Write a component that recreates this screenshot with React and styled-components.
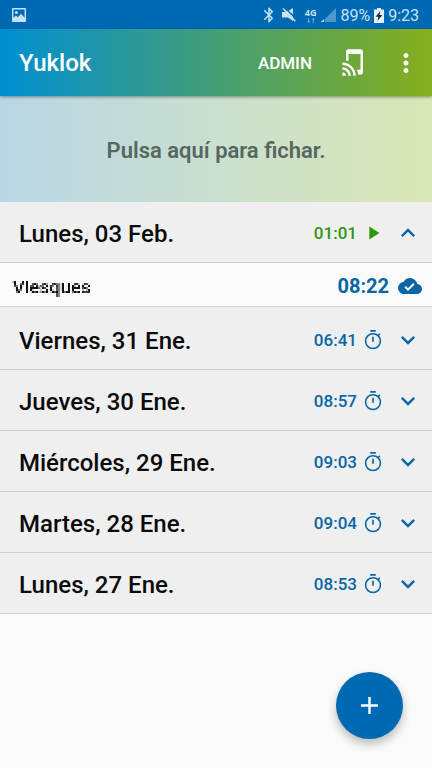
import React, { useState } from 'react';
import styled, { createGlobalStyle } from 'styled-components';
import {
  MdAdd,
  MdBluetooth,
  MdCloudDone,
  MdKeyboardArrowDown,
  MdKeyboardArrowUp,
  MdMoreVert,
  MdPlayArrow,
  MdTapAndPlay,
} from 'react-icons/md';

const COLORS = {
  primary: '#0069b4',
  time: '#0766a3',
  running: '#2f9610',
  status: '#c5e2f7',
  row: '#efefef',
  page: '#fafafa',
  line: '#cdcdcd',
};

const DAYS = [
  {
    label: 'Lunes, 03 Feb.',
    time: '01:01',
    running: true,
    entries: [{ place: 'Viesques', time: '08:22' }],
  },
  { label: 'Viernes, 31 Ene.', time: '06:41' },
  { label: 'Jueves, 30 Ene.', time: '08:57' },
  { label: 'Miércoles, 29 Ene.', time: '09:03' },
  { label: 'Martes, 28 Ene.', time: '09:04' },
  { label: 'Lunes, 27 Ene.', time: '08:53' },
];

const PictureIcon = () => (
  <svg width="14" height="14" viewBox="0 0 14 14" aria-hidden="true">
    <path
      fill="currentColor"
      fillRule="evenodd"
      d="M1 0h12a1 1 0 0 1 1 1v12a1 1 0 0 1-1 1H1a1 1 0 0 1-1-1V1a1 1 0 0 1 1-1zM1.4 1.4v8.4L4 7.4l1.8 1.8 3.2-3.4 3.6 4V1.4z"
    />
    <circle cx="4.4" cy="4.4" r="1.5" fill="currentColor" />
  </svg>
);

const MuteIcon = () => (
  <svg width="14" height="16" viewBox="0 0 14 16" aria-hidden="true">
    <path fill="currentColor" d="M0 5h3.4l1.6-1.3 6 6V14L6 10.6H0zM11 1v6.6L6.6 3.8z" />
    <path stroke="currentColor" strokeWidth="1.5" d="M1 1.4l12.4 12.8" />
  </svg>
);

const SignalIcon = () => (
  <svg width="15" height="14" viewBox="0 0 15 14" aria-hidden="true">
    <path fill="currentColor" opacity="0.4" d="M15 0v14H4V11z" />
    <path fill="currentColor" d="M3 11v3H0z" />
  </svg>
);

const DataIcon = () => (
  <svg width="8" height="5" viewBox="0 0 8 5" aria-hidden="true">
    <path fill="currentColor" opacity="0.55" d="M1.2 0h1v3H3.4L1.7 5 0 3h1.2zM5.8 5h1V2H8L6.3 0 4.6 2h1.2z" />
  </svg>
);

const BatteryIcon = () => (
  <svg width="10" height="15" viewBox="0 0 10 15" aria-hidden="true">
    <path fill="#e3f2fc" d="M3 0h4v1.5h3V15H0V1.5h3z" />
    <path fill="#1b2b38" d="M6.4 3L1.6 8.8h2.8L3.4 13l5-6H5.5z" />
  </svg>
);

const TimerIcon = () => (
  <svg width="22" height="22" viewBox="0 0 24 24" fill="none" stroke="currentColor" aria-hidden="true">
    <circle cx="12" cy="13.2" r="8.1" strokeWidth="1.7" />
    <path strokeWidth="1.8" d="M9 2h6M12 8.4v5.4M17.6 7.2l1.8-1.8" />
  </svg>
);

// Turns whatever it is applied to into a 2px mosaic
const MosaicFilter = () => (
  <HiddenSvg width="0" height="0" aria-hidden="true">
    <filter id="mosaic" x="0" y="0" width="1" height="1" colorInterpolationFilters="sRGB">
      <feFlood x="0" y="0" width="1" height="1" floodColor="#000" />
      <feComposite width="2" height="2" />
      <feTile result="grid" />
      <feComposite in="SourceGraphic" in2="grid" operator="in" result="dots" />
      <feOffset in="dots" dx="1" result="right" />
      <feMerge result="pairs">
        <feMergeNode in="dots" />
        <feMergeNode in="right" />
      </feMerge>
      <feOffset in="pairs" dy="1" result="below" />
      <feMerge>
        <feMergeNode in="pairs" />
        <feMergeNode in="below" />
      </feMerge>
    </filter>
  </HiddenSvg>
);

const Day = ({ day }) => {
  const [open, setOpen] = useState(Boolean(day.entries));
  return (
    <li>
      <DayButton type="button" aria-expanded={open} onClick={() => setOpen(!open)}>
        <DayLabel>{day.label}</DayLabel>
        <DayTime $running={day.running}>
          {day.time}
          {day.running ? <MdPlayArrow size={22} /> : <TimerIcon />}
        </DayTime>
        {open ? <MdKeyboardArrowUp size={28} /> : <MdKeyboardArrowDown size={28} />}
      </DayButton>
      {open && day.entries && (
        <Entries>
          {day.entries.map((entry) => (
            <Entry key={entry.place}>
              <Place>{entry.place}</Place>
              <EntryTime>{entry.time}</EntryTime>
              <MdCloudDone size={24} />
            </Entry>
          ))}
        </Entries>
      )}
    </li>
  );
};

const App = () => (
  <Page>
    <GlobalStyle />
    <MosaicFilter />
    <StatusBar>
      <PictureIcon />
      <StatusGroup>
        <MdBluetooth size={18} />
        <MuteIcon />
        <Network>
          4G
          <DataIcon />
        </Network>
        <SignalIcon />
        <span>89%</span>
        <BatteryIcon />
        <span>9:23</span>
      </StatusGroup>
    </StatusBar>
    <AppBar>
      <Title>Yuklok</Title>
      <AdminButton type="button">ADMIN</AdminButton>
      <IconButton type="button" aria-label="Fichar con NFC">
        <MdTapAndPlay size={29} />
      </IconButton>
      <IconButton type="button" aria-label="Más opciones">
        <MdMoreVert size={30} />
      </IconButton>
    </AppBar>
    <main>
      <ClockButton type="button">Pulsa aquí para fichar.</ClockButton>
      <DayList>
        {DAYS.map((day) => <Day key={day.label} day={day} />)}
      </DayList>
    </main>
    <AddButton type="button" aria-label="Añadir">
      <MdAdd size={29} />
    </AddButton>
  </Page>
);

const GlobalStyle = createGlobalStyle`
  *, *::before, *::after {
    box-sizing: border-box;
  }
  body {
    margin: 0;
    background: ${COLORS.page};
    font-family: Roboto, "Liberation Sans", sans-serif;
  }
  button {
    border: 0;
    padding: 0;
    background: none;
    color: inherit;
    font: inherit;
    cursor: pointer;
  }
  svg {
    display: block;
    flex-shrink: 0;
  }
`;

const Page = styled.div`
  min-height: 100vh;
`;

const HiddenSvg = styled.svg`
  position: absolute;
`;

const StatusBar = styled.div`
  display: flex;
  align-items: center;
  justify-content: space-between;
  height: 29px;
  padding: 1px 13px 0 12px;
  background: ${COLORS.primary};
  color: ${COLORS.status};
  font-size: 16px;
`;

const StatusGroup = styled.div`
  display: flex;
  align-items: center;
  gap: 4px;
`;

const Network = styled.span`
  display: flex;
  flex-direction: column;
  align-items: center;
  gap: 1px;
  margin: 0 1px 0 5px;
  font: 700 9px/9px "Open Sans", sans-serif;
`;

const AppBar = styled.header`
  position: relative;
  display: flex;
  align-items: center;
  height: 67px;
  padding: 0 11px 0 19px;
  background: linear-gradient(to right, #008fd3, #449e75 50%, #86ae1c);
  box-shadow: 0 1px 3px rgba(0, 0, 0, 0.4);
  color: #fff;
`;

const Title = styled.h1`
  flex: 1;
  margin: 0;
  font-size: 24px;
  font-weight: 500;
`;

const AdminButton = styled.button`
  margin-right: 28px;
  font-size: 17px;
  font-weight: 500;
`;

const IconButton = styled.button`
  & + & {
    margin-left: 22px;
  }
`;

const ClockButton = styled.button`
  display: block;
  width: 100%;
  height: 106px;
  padding-top: 2px;
  background: linear-gradient(to right, #b9d6e5, #cadfcf 50%, #d9e6b3);
  color: #56675f;
  font-size: 22px;
  font-weight: 600;
`;

const DayList = styled.ul`
  margin: 0;
  padding: 0;
  list-style: none;
`;

const DayButton = styled.button`
  display: flex;
  align-items: center;
  width: 100%;
  height: 61px;
  padding: 2px 10px 0 19px;
  border-bottom: 1px solid ${COLORS.line};
  background: ${COLORS.row};
  color: ${COLORS.time};
`;

const DayLabel = styled.span`
  flex: 1;
  padding-top: 2px;
  color: #0b0b0b;
  font-size: 24px;
  font-weight: 500;
  text-align: left;
`;

const DayTime = styled.span`
  display: flex;
  align-items: center;
  gap: 5px;
  margin-right: 10px;
  color: ${(props) => (props.$running ? COLORS.running : COLORS.time)};
  font-size: 17px;
  font-weight: 500;
`;

const Entries = styled.div`
  padding-bottom: 2px;
  background: ${COLORS.row};
`;

const Entry = styled.div`
  display: flex;
  align-items: center;
  gap: 9px;
  height: 44px;
  padding: 3px 10px 0 12px;
  border-bottom: 1px solid #d8d8d8;
  background: ${COLORS.page};
  color: ${COLORS.time};
`;

const Place = styled.span`
  color: #111;
  font-size: 19px;
  font-weight: 500;
  filter: url(#mosaic);
`;

const EntryTime = styled.span`
  margin-left: auto;
  font-size: 20px;
  font-weight: 700;
`;

const AddButton = styled.button`
  position: fixed;
  right: 29px;
  bottom: 29px;
  display: grid;
  place-items: center;
  width: 67px;
  height: 67px;
  border-radius: 50%;
  background: ${COLORS.primary};
  box-shadow: 0 5px 10px rgba(0, 0, 0, 0.25);
  color: #fff;
`;

export default App;
